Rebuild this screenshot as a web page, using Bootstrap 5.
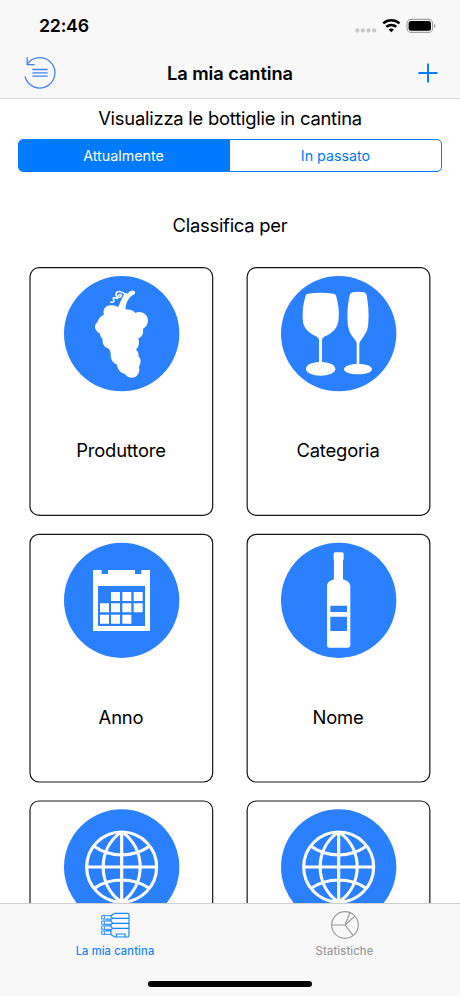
<!DOCTYPE html>
<html lang="it">
<head>
<meta charset="utf-8">
<meta name="viewport" content="width=device-width, initial-scale=1">
<title>La mia cantina</title>
<link href="https://cdn.jsdelivr.net/npm/bootstrap@5.3.0/dist/css/bootstrap.min.css" rel="stylesheet">
<style>
  :root { --ios-blue: #007aff; }
  body { font-family: Inter, Roboto, sans-serif; color: #000; }
  .screen { height: 996px; }
  .top-bar { height: 99px; background: #f8f8f8; border-bottom: 1px solid #dcdcdc; }
  .status { height: 49px; padding: 3px 23px 0 39px; }
  .clock { font-size: 17.8px; letter-spacing: -.25px; }
  .title-row { height: 48px; padding: 0 21px 0 24px; }
  .bar-side { width: 60px; }
  .title-row .bar-side:last-child { width: 63px; }
  .page-title { font-size: 18.3px; letter-spacing: -.09px; padding-top: 2px; }
  .lead-line { height: 40px; font-size: 18.4px; letter-spacing: -.23px; }
  .segments { height: 33px; margin: 0 18px; border: 1.2px solid var(--ios-blue); border-radius: 5px; }
  .segments .btn { font-size: 14.3px; line-height: 1; letter-spacing: -.02px; padding: 2px 0 0; color: var(--ios-blue); border: 0; border-radius: 0; }
  .segments .btn.active { background: var(--ios-blue); color: #fff; }
  .segments .btn:first-child { padding-right: 2px; }
  .sort-line { height: 95px; padding-top: 12px; font-size: 18.4px; letter-spacing: -.25px; }
  .tiles { display: grid; grid-template-columns: 184px 184px; column-gap: 33px; row-gap: 18px; padding-left: 29px; }
  .tile { display: grid; height: 249px; }
  .tile > * { grid-area: 1 / 1; }
  .tile svg { width: 184px; height: 249px; overflow: visible; }
  .tile-name { align-self: start; margin-top: 170px; font-size: 18.4px; line-height: 27px; letter-spacing: -.17px; }
  .tab-bar { height: 93px; background: #f8f8f8; border-top: 1px solid #cfcfcf; }
  .tab { font-size: 11.1px; line-height: 14px; letter-spacing: .16px; padding-top: 6px; color: #999; font-weight: 550; }
  .tab:last-child { padding-right: 1px; }
  .tab.active { color: #1683ff; }
  .tab svg { width: 30px; height: 30px; margin-bottom: 4px; }
  .home-bar { width: 164px; height: 6px; border-radius: 3px; background: #000; margin-bottom: 9px; }
</style>
</head>
<body class="bg-white">
<div class="screen d-flex flex-column overflow-hidden">
  <header class="top-bar flex-shrink-0">
    <div class="status d-flex align-items-center justify-content-between">
      <span class="clock fw-semibold">22:46</span>
      <svg width="84" height="24" viewBox="0 0 84 24">
        <g fill="#c8c8c8"><circle cx="4.300" cy="16.400" r="2.100"/><circle cx="9.900" cy="16.400" r="2.100"/><circle cx="15.500" cy="16.400" r="2.100"/><circle cx="21.100" cy="16.400" r="2.100"/></g>
        <g fill="none" stroke="#000" stroke-width="2.500"><path d="M30.100 9.400a12.200 12.200 0 0 1 16.400 0"/><path d="M33.300 12.800a7.600 7.600 0 0 1 10 0"/></g>
        <path d="M35.600 15.500a4.300 4.300 0 0 1 5.400 0L38.300 18.300z"/>
        <rect x="54" y="5.400" width="25.600" height="13" rx="4" fill="none" stroke="#a0a0a0" stroke-width="1.100"/>
        <rect x="55.600" y="7" width="22.400" height="9.800" rx="2.500"/>
        <path d="M81 9.800c2 1 2 3.300 0 4.200z" fill="#a0a0a0"/>
      </svg>
    </div>
    <div class="title-row d-flex align-items-center justify-content-between">
      <div class="bar-side d-flex"><svg width="32" height="34" viewBox="73 170 96 102" fill="none" stroke="#3f83f0" stroke-width="3.800">
        <path d="M76 231A45.500 45.500 0 1 0 84 193M82.500 174V196H105"/>
        <path d="M98 210.500H144M98 220.500H144M98 230.500H144"/>
      </svg></div>
      <span class="page-title fw-semibold text-nowrap">La mia cantina</span>
      <div class="bar-side d-flex justify-content-end"><svg width="22" height="22" viewBox="0 0 22 22" stroke="#007aff" stroke-width="1.900"><path d="M1.500 11H20.500M11 1.500V20.500"/></svg></div>
    </div>
  </header>

  <main class="flex-grow-1 overflow-hidden text-center">
    <div class="lead-line d-flex align-items-center justify-content-center">Visualizza le bottiglie in cantina</div>
    <div class="segments d-flex overflow-hidden" role="group">
      <button type="button" class="btn active w-50">Attualmente</button>
      <button type="button" class="btn w-50">In passato</button>
    </div>
    <div class="sort-line d-flex align-items-center justify-content-center">Classifica per</div>

    <div class="tiles">
      <div class="tile">
        <svg viewBox="27 21 552 747">
          <rect x="30" y="23" width="548" height="743" rx="27" fill="none" stroke="#161616" stroke-width="3.600"/>
          <circle cx="305" cy="221" r="173" fill="#2a80ff"/>
          <path fill="#fff" d="M294 142C301 130 302 119 311 106L315 98L322 101C328 94 336 88 343 93C348 99 344 104 337 106C325 115 317 128 317 149C330 147 340 151 346 159C362 151 383 161 384 181C384 193 378 202 369 206C371 221 366 231 355 235C359 249 357 261 348 269C356 276 357 283 355 289C363 295 365 309 357 319C360 334 356 347 344 352C332 356 320 351 315 341C304 340 293 330 291 314C278 309 271 297 272 280C270 271 268 268 264 265C252 261 246 250 248 237C242 231 240 226 240 221C224 213 220 195 232 187C235 176 242 168 252 164C247 149 256 136 272 136C282 135 289 138 294 142Z"/>
          <path d="M317 105C307 93 290 91 288 102C286 112 304 115 304 106C302 98 288 110 293 117C285 111 276 112 281 119C284 126 279 128 272 126" fill="none" stroke="#fff" stroke-width="4.500" stroke-linecap="round"/>
        </svg>
        <div class="tile-name">Produttore</div>
      </div>
      <div class="tile">
        <svg viewBox="18 21 552 747">
          <rect x="21.500" y="23" width="548" height="743" rx="27" fill="none" stroke="#161616" stroke-width="3.600"/>
          <circle cx="296" cy="221" r="173" fill="#2a80ff"/>
          <path fill="#fff" d="M203 101Q242 95 281 101C286 102 288 105 289 110C295 132 298 153 296 176C294 207 275 219 255 229Q247 233 246 240V306C268 307 286 315 286 327C286 339 266 347 242 347S198 339 198 327C198 315 215 307 237 306V240Q236 233 228 229C207 218 189 206 188 176C187 151 190 131 196 110C197 105 199 102 203 101Z"/>
          <path fill="#fff" d="M338 97Q355 94 372 97Q378 99 380 106C385 133 387 158 385 189C384 213 374 226 364 239Q358 245 358 252V312C379 312 396 319 396 328C396 337 377 343 354 343S312 337 312 328C312 319 329 312 350 312V252Q350 245 345 239C333 226 325 213 323 189C321 158 323 131 329 106Q331 98 338 97Z"/>
        </svg>
        <div class="tile-name">Categoria</div>
      </div>
      <div class="tile">
        <svg viewBox="27 102 552 747">
          <rect x="30" y="103" width="548" height="743" rx="27" fill="none" stroke="#161616" stroke-width="3.600"/>
          <circle cx="305" cy="301" r="173" fill="#2a80ff"/>
          <path fill="#fff" fill-rule="evenodd" d="M219 210H245V222H264V210H345V222H364V210H390V393H219ZM234 258V378H375V258Z"/>
          <path fill="#fff" d="M273 276h27v27h-27zM307 276h27v27h-27zM341 276h27v27h-27zM240 310h27v27h-27zM273 310h27v27h-27zM307 310h27v27h-27zM341 310h27v27h-27zM240 344h27v27h-27zM273 344h27v27h-27zM307 344h27v27h-27z"/>
        </svg>
        <div class="tile-name">Anno</div>
      </div>
      <div class="tile">
        <svg viewBox="18 102 552 747">
          <rect x="21.500" y="103" width="548" height="743" rx="27" fill="none" stroke="#161616" stroke-width="3.600"/>
          <circle cx="296" cy="301" r="173" fill="#2a80ff"/>
          <path fill="#fff" fill-rule="evenodd" d="M286 157H306Q311 157 311 162V178L309 182V238C321 242 331 248 331 259V435Q331 443 323 443H269Q261 443 261 435V259C261 248 270 242 282 238V182L281 178V162Q281 157 286 157ZM271 317V336H321V317ZM271 350V393H321V350Z"/>
        </svg>
        <div class="tile-name">Nome</div>
      </div>
      <div class="tile">
        <svg viewBox="27 93 552 747">
          <rect x="30" y="93" width="548" height="743" rx="27" fill="none" stroke="#161616" stroke-width="3.600"/>
          <circle cx="305" cy="291" r="173" fill="#2a80ff"/>
          <g fill="none" stroke="#fff" stroke-width="9.500"><circle cx="305" cy="291" r="105"/><path d="M305 186V396M200 291H410M222 229Q258 255 305 255T388 229M222 355Q258 330 305 330T388 355M302 187C232 239 232 343 302 395M308 187C378 239 378 343 308 395"/></g>
        </svg>
      </div>
      <div class="tile">
        <svg viewBox="27 93 552 747">
          <rect x="30.500" y="93" width="548" height="743" rx="27" fill="none" stroke="#161616" stroke-width="3.600"/>
          <circle cx="305" cy="291" r="173" fill="#2a80ff"/>
          <g fill="none" stroke="#fff" stroke-width="9.500"><circle cx="305" cy="291" r="105"/><path d="M305 186V396M200 291H410M222 229Q258 255 305 255T388 229M222 355Q258 330 305 330T388 355M302 187C232 239 232 343 302 395M308 187C378 239 378 343 308 395"/></g>
        </svg>
      </div>
    </div>
  </main>

  <footer class="tab-bar flex-shrink-0 d-flex flex-column justify-content-between align-items-center">
    <nav class="d-flex w-100 text-center">
      <div class="tab active w-50"><svg class="d-block mx-auto" viewBox="239 418 90 90" fill="none" stroke="#1683ff" stroke-width="3.400">
        <path d="M283 428H321Q326 428 326 433V494Q326 499 321 499H283L272 492V477L277 473L272 468V461L277 457L272 452V447L277 443L272 439V435ZM277 443H326M277 458H326M277 473H326M288 499V490H314V499"/>
        <path d="M272 435H244V445H272M272 451H244V461H272M272 466H244V476H272M272 481H244V491H272M252 435V445M252 451V461M252 466V476M252 481V491M256 448H272M256 463H272M256 479H272" stroke-width="2.700"/></svg>La mia cantina</div>
      <div class="tab w-50"><svg class="d-block mx-auto" viewBox="269 418 90 90" fill="none" stroke="#999" stroke-width="3.500">
        <circle cx="314" cy="463" r="40"/><path d="M274 463H314L329 426M314 463L343 437M314 463L338 494"/></svg>Statistiche</div>
    </nav>
    <div class="home-bar"></div>
  </footer>
</div>
<script src="https://cdn.jsdelivr.net/npm/bootstrap@5.3.0/dist/js/bootstrap.bundle.min.js"></script>
</body>
</html>
